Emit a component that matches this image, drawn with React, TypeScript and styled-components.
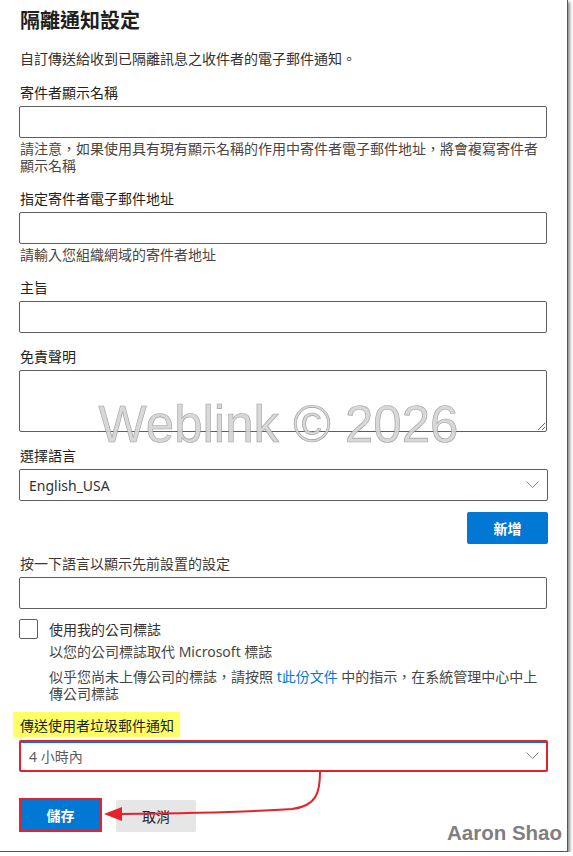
import React from 'react'
import styled, { createGlobalStyle } from 'styled-components'

const GlobalStyle = createGlobalStyle`
  html, body {
    margin: 0;
    padding: 0;
    background: #fff;
  }
  * {
    box-sizing: border-box;
  }
`

const Frame = styled.div`
  position: relative;
  width: 568px;
  height: 852px;
  background: #fff;
  border-right: 1px solid #555;
  border-bottom: 1px solid #555;
  box-shadow: 2px 2px 3px rgba(0, 0, 0, 0.45);
  font-family: "Noto Sans", "Noto Sans CJK TC", sans-serif;
  font-size: 14px;
  color: #323130;
  overflow: hidden;
`

const Form = styled.div`
  display: flex;
  flex-direction: column;
  padding: 8px 19px 0 20px;
`

const Title = styled.h1`
  margin: 0;
  font-size: 20px;
  line-height: 26px;
  font-weight: 600;
  color: #201f1e;
`

const Description = styled.p`
  margin: 15px 0 0;
  line-height: 20px;
  color: #323130;
`

const Field = styled.div`
  display: flex;
  flex-direction: column;
  margin-top: 14px;
`

const Label = styled.label`
  line-height: 20px;
  margin-bottom: 3px;
  color: #201f1e;
`

const PlainLabel = styled(Label)`
  color: #3b3a39;
`

const TextInput = styled.input`
  height: 32px;
  width: 100%;
  border: 1px solid #605e5c;
  border-radius: 2px;
  margin: 0 0 0 -1px;
  padding: 0 9px;
  font: inherit;
  outline: none;
`

const TextArea = styled.textarea`
  height: 62px;
  width: 100%;
  border: 1px solid #605e5c;
  border-radius: 2px;
  margin: 0 0 0 -1px;
  padding: 6px 9px;
  font: inherit;
  resize: vertical;
  outline: none;
  display: block;
`

const Help = styled.div`
  padding: 2px 0 1px;
  line-height: 17px;
  color: #484644;
`

const Dropdown = styled.div<{ $marked?: boolean }>`
  height: 32px;
  margin-left: -1px;
  border: ${p => (p.$marked ? '2px solid #e8202a' : '1px solid #605e5c')};
  box-shadow: ${p => (p.$marked ? 'inset 0 1px 0 #0078d4' : 'none')};
  border-radius: 2px;
  display: flex;
  align-items: center;
  justify-content: space-between;
  padding: ${p => (p.$marked ? '0 7px 0 8px' : '0 8px 0 9px')};
`

const DropdownText = styled.span<{ $muted?: boolean }>`
  font-size: 14px;
  color: ${p => (p.$muted ? '#605e5c' : '#323130')};
`

const Chevron = () => (
  <svg width="13" height="8" viewBox="0 0 13 8">
    <polyline points="0.5,0.5 6.5,6.5 12.5,0.5" fill="none" stroke="#8a8886" strokeWidth="1" />
  </svg>
)

const ActionRow = styled.div`
  display: flex;
  justify-content: flex-end;
  margin-top: 11px;
`

const PrimaryButton = styled.button`
  width: 81px;
  height: 32px;
  border: none;
  border-radius: 2px;
  background: #0078d4;
  color: #fff;
  font: inherit;
  font-weight: 600;
`

const CheckRow = styled.div`
  display: flex;
  align-items: center;
  gap: 11px;
  margin-top: 10px;
`

const CheckBox = styled.span`
  display: inline-block;
  width: 19px;
  height: 20px;
  margin-left: -1px;
  border: 1px solid #605e5c;
  border-radius: 2px;
`

const SubText = styled.div<{ $gap: number }>`
  margin: ${p => p.$gap}px 0 0 29px;
  line-height: 17px;
  color: #484644;
`

const Link = styled.span`
  color: #0078d4;
`

const Highlight = styled.div`
  align-self: flex-start;
  margin: 10px 0 0 -7px;
  padding: 4px 6px 1px 7px;
  height: 25px;
  line-height: 20px;
  background: #ffff66;
  color: #201f1e;
`

const Footer = styled.div`
  display: flex;
  align-items: flex-start;
  margin-top: 26px;
`

const SaveButton = styled(PrimaryButton)`
  width: 83px;
  height: 34px;
  margin-left: -1px;
  border: 2px solid #e8202a;
  border-radius: 0;
`

const CancelButton = styled.button`
  width: 80px;
  height: 32px;
  margin: 2px 0 0 14px;
  border: none;
  border-radius: 2px;
  background: #e6e6e6;
  color: #201f1e;
  font: inherit;
`

const Watermark = styled.div`
  position: absolute;
  left: 0;
  right: 0;
  top: 399px;
  text-align: center;
  padding-right: 10px;
  font-family: "Liberation Sans", Arial, sans-serif;
  font-size: 51px;
  line-height: 1;
  color: rgba(212, 212, 212, 0.9);
  -webkit-text-stroke: 0.6px rgba(130, 130, 130, 0.7);
  pointer-events: none;
`

const Signature = styled.div`
  position: absolute;
  right: 5px;
  top: 823px;
  font-family: "Liberation Sans", Arial, sans-serif;
  font-weight: 700;
  font-size: 20.5px;
  line-height: 1;
  color: #7f7f7f;
`

const Arrow = styled.svg`
  position: absolute;
  left: 0;
  top: 0;
  pointer-events: none;
`

const App = () => {
  return (
    <>
      <GlobalStyle />
      <Frame>
        <Form>
          <Title>隔離通知設定</Title>
          <Description>自訂傳送給收到已隔離訊息之收件者的電子郵件通知。</Description>

          <Field>
            <Label>寄件者顯示名稱</Label>
            <TextInput />
            <Help>請注意，如果使用具有現有顯示名稱的作用中寄件者電子郵件地址，將會複寫寄件者顯示名稱</Help>
          </Field>

          <Field>
            <Label>指定寄件者電子郵件地址</Label>
            <TextInput />
            <Help>請輸入您組織網域的寄件者地址</Help>
          </Field>

          <Field>
            <Label>主旨</Label>
            <TextInput />
          </Field>

          <Field>
            <Label>免責聲明</Label>
            <TextArea />
          </Field>

          <Field>
            <Label>選擇語言</Label>
            <Dropdown>
              <DropdownText>English_USA</DropdownText>
              <Chevron />
            </Dropdown>
          </Field>

          <ActionRow>
            <PrimaryButton>新增</PrimaryButton>
          </ActionRow>

          <Field style={{ marginTop: 10 }}>
            <PlainLabel>按一下語言以顯示先前設置的設定</PlainLabel>
            <TextInput />
          </Field>

          <CheckRow>
            <CheckBox />
            <span>使用我的公司標誌</span>
          </CheckRow>
          <SubText $gap={4}>以您的公司標誌取代 Microsoft 標誌</SubText>
          <SubText $gap={8}>
            似乎您尚未上傳公司的標誌，請按照 <Link>t此份文件</Link> 中的指示，在系統管理中心中上傳公司標誌
          </SubText>

          <Highlight>傳送使用者垃圾郵件通知</Highlight>
          <Field style={{ marginTop: 3 }}>
            <Dropdown $marked>
              <DropdownText $muted>4 小時內</DropdownText>
              <Chevron />
            </Dropdown>
          </Field>

          <Footer>
            <SaveButton>儲存</SaveButton>
            <CancelButton>取消</CancelButton>
          </Footer>
        </Form>

        <Watermark>Weblink © 2026</Watermark>
        <Signature>Aaron Shao</Signature>

        <Arrow width="567" height="851" viewBox="0 0 567 851">
          <path
            d="M320 772 C320 792 317 806 292 809 C250 812 200 813 120 814"
            fill="none"
            stroke="#e8202a"
            strokeWidth="2"
          />
          <polygon points="104,814 122,807 122,821" fill="#e8202a" />
        </Arrow>
      </Frame>
    </>
  )
}

export default App
